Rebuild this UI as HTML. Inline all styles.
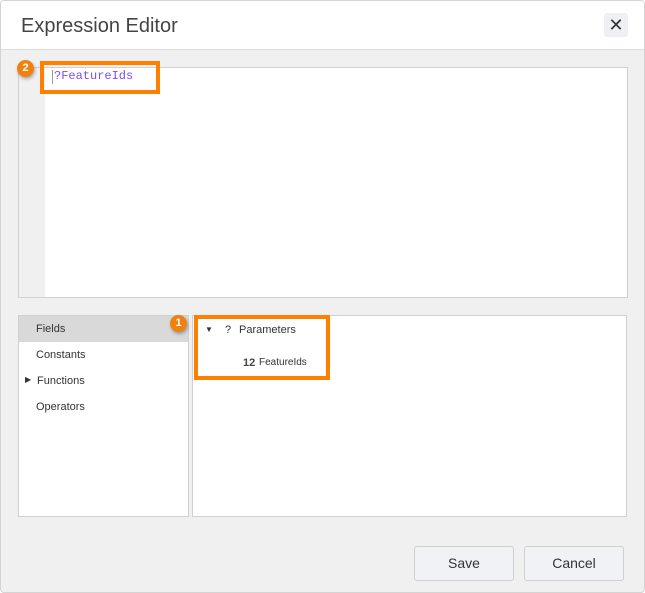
<!DOCTYPE html>
<html><head><style>
*{box-sizing:border-box;margin:0;padding:0}
body{width:645px;height:593px;font-family:"Liberation Sans",sans-serif;background:#fff;position:relative;overflow:hidden}
.dlg{position:absolute;left:0;top:0;width:645px;height:593px;border:1px solid #d4d4d4;border-radius:4px;background:#f0f0f0;overflow:hidden}
.hdr{position:absolute;left:0;top:0;width:643px;height:49px;background:#fff;border-bottom:1px solid #ddd}
.title{position:absolute;left:20px;top:14px;font-size:20px;color:#444}
.x{position:absolute;left:603px;top:12px;width:24px;height:24px;background:#eef0f3;border-radius:3px;text-align:center;line-height:24px;font-size:18px;color:#333}
.abs{position:absolute}
.box{background:#fff;border:1px solid #d0d0d0}
.or{position:absolute;border:4px solid #ff8000}
.badge{position:absolute;width:17px;height:17px;border-radius:50%;background:#f08010;color:#fff;font-size:11px;font-weight:bold;text-align:center;line-height:17px;box-shadow:1px 2px 3px rgba(0,0,0,.3)}
.item{position:absolute;font-size:11px;color:#333}
.btn{position:absolute;top:544px;width:100px;height:35px;border:1px solid #d0d0d0;background:#f0f2f5;border-radius:3px;text-align:center;line-height:33px;font-size:14px;color:#333}
</style></head><body>
<div class="dlg">
<div class="hdr"><div class="title">Expression Editor</div><div class="x">✕</div></div>
<div class="abs box" style="left:17px;top:66px;width:610px;height:231px"></div>
<div class="abs" style="left:18px;top:67px;width:26px;height:229px;background:#f0f0f0"></div>
<div class="abs" style="left:53px;top:68px;font-family:'Liberation Mono',monospace;font-size:12px;color:#7a4fe8">?FeatureIds</div>
<div class="abs" style="left:51px;top:69px;width:1px;height:14px;background:#999"></div>
<div class="or" style="left:39px;top:60px;width:120px;height:33px"></div>
<div class="badge" style="left:16px;top:59px">2</div>

<div class="abs box" style="left:17px;top:314px;width:171px;height:202px"></div>
<div class="abs" style="left:18px;top:315px;width:169px;height:26px;background:#d9d9d9"></div>
<div class="item" style="left:35px;top:322px">Fields</div>
<div class="item" style="left:35px;top:348px">Constants</div>
<div class="item" style="left:24px;top:374px;font-size:8px">▶</div>
<div class="item" style="left:36px;top:374px">Functions</div>
<div class="item" style="left:35px;top:400px">Operators</div>
<div class="badge" style="left:169px;top:314px">1</div>

<div class="abs box" style="left:191px;top:314px;width:435px;height:202px"></div>
<div class="item" style="left:204px;top:324px;font-size:8px">▼</div>
<div class="item" style="left:224px;top:323px">?</div>
<div class="item" style="left:238px;top:323px">Parameters</div>
<div class="item" style="left:242px;top:356px;font-weight:bold;font-size:11px;color:#444">12</div>
<div class="item" style="left:258px;top:356px;font-size:10px">FeatureIds</div>
<div class="or" style="left:193px;top:314px;width:136px;height:65px"></div>

<div class="btn" style="left:413px;top:545px">Save</div>
<div class="btn" style="left:523px;top:545px">Cancel</div>
</div>
</body></html>
